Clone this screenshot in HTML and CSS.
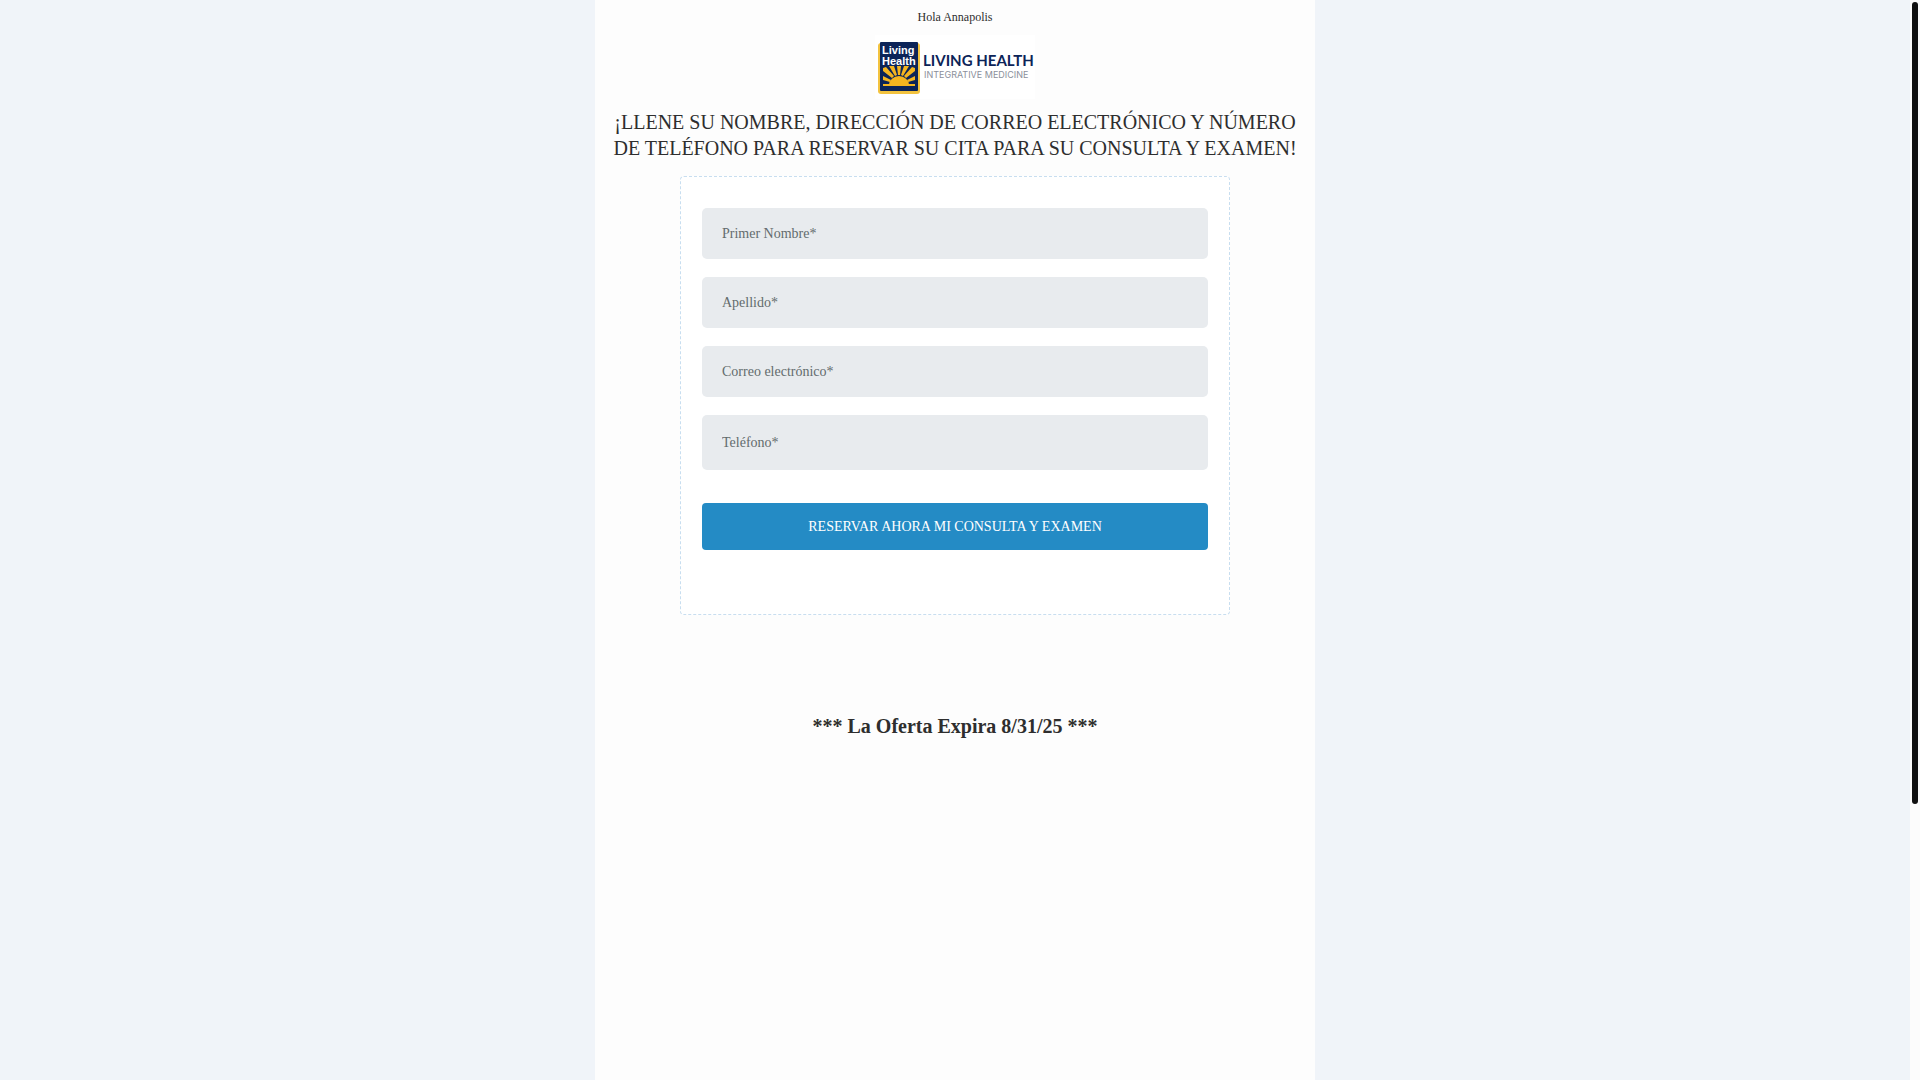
FILE: index.html
```html
<!DOCTYPE html>
<html lang="es">
<head>
<meta charset="utf-8">
<meta name="viewport" content="width=device-width, initial-scale=1">
<title>Living Health Integrative Medicine</title>
<link rel="stylesheet" href="styles.css">
</head>
<body>
<div class="page">
  <main class="column">
    <p class="greeting">Hola Annapolis</p>
    <svg class="logo" width="160" height="64" viewBox="0 0 160 64" role="img" aria-label="Living Health Integrative Medicine">
      <rect width="160" height="64" fill="#fff"/>
      <rect x="3" y="8" width="42" height="51" rx="3" fill="#f3c33f"/>
      <rect x="5" y="7" width="38" height="49" rx="1" fill="#0c2458"/>
      <text class="logo-badge" x="7" y="19">Living</text>
      <text class="logo-badge" x="7" y="30">Health</text>
      <g fill="#f5b51f">
        <path d="M14 50a10 9 0 0 1 20 0z"/>
        <path d="M8 49h32v2H8zM8 41l8 4-1 2-7-2zM40 41l-8 4 1 2 7-2zM8 33l3-1 8 9-2 2-9-7zM40 33l-3-1-8 9 2 2 9-7zM14 31h5l3 9-2 1zM34 31h-5l-3 9 2 1zM22 31h4l-1 9h-2z"/>
      </g>
      <text class="logo-name" x="48" y="31">LIVING HEALTH</text>
      <text class="logo-tag" x="49" y="43">INTEGRATIVE MEDICINE</text>
    </svg>
    <h1 class="title">¡LLENE SU NOMBRE, DIRECCIÓN DE CORREO ELECTRÓNICO Y NÚMERO DE TELÉFONO PARA RESERVAR SU CITA PARA SU CONSULTA Y EXAMEN!</h1>
    <form class="booking">
      <input class="field" type="text" name="first" placeholder="Primer Nombre*" aria-label="Primer Nombre">
      <input class="field" type="text" name="last" placeholder="Apellido*" aria-label="Apellido">
      <input class="field" type="email" name="email" placeholder="Correo electrónico*" aria-label="Correo electrónico">
      <input class="field field-phone" type="tel" name="phone" placeholder="Teléfono*" aria-label="Teléfono">
      <button class="submit" type="submit">RESERVAR AHORA MI CONSULTA Y EXAMEN</button>
    </form>
    <h2 class="offer">*** La Oferta Expira 8/31/25 ***</h2>
  </main>
  <div class="track" aria-hidden="true"><div class="thumb"></div></div>
</div>
</body>
</html>
```
FILE: styles.css
```css
* { box-sizing: border-box; }

body {
  margin: 0;
  background: #f0f4f9;
  color: #2e2e2e;
  font-family: "Liberation Serif", "Times New Roman", serif;
}

.page {
  display: grid;
  grid-template-columns: 1fr 10px;
  min-height: 100vh;
}

.column {
  display: flex;
  flex-direction: column;
  align-items: center;
  width: 100%;
  max-width: 720px;
  margin: 0 auto;
  padding: 8px 16px;
  background: #fdfdfd;
}

.greeting {
  margin: 0 0 9px;
  font-size: 12px;
  line-height: 18px;
}

.logo { display: block; }

.logo-badge {
  fill: #fff;
  font: bold 11px "Liberation Sans", Arial, sans-serif;
}

.logo-name {
  fill: #0c2458;
  font: 700 15px Lato, sans-serif;
}

.logo-tag {
  fill: #8b8f9b;
  font: 9px Inter, sans-serif;
}

.title {
  margin: 10px 0 15px;
  font-size: 20px;
  font-weight: 400;
  line-height: 26px;
  text-align: center;
}

.booking {
  display: flex;
  flex-direction: column;
  gap: 18px;
  width: 100%;
  max-width: 550px;
  padding: 31px 21px 64px;
  border: 1px dashed #c8def0;
  border-radius: 4px;
  background: #fff;
}

.field {
  width: 100%;
  height: 51px;
  padding: 0 20px;
  border: 0;
  border-radius: 5px;
  background: #e8ebee;
  color: #2e2e2e;
  font: 14px "Liberation Serif", "Times New Roman", serif;
}

.field::placeholder { color: #636b6d; opacity: 1; }

.field-phone { height: 55px; }

.submit {
  height: 47px;
  margin-top: 15px;
  border: 0;
  border-radius: 4px;
  background: #248bc5;
  color: #fff;
  font: 14px "Liberation Serif", "Times New Roman", serif;
}

.offer {
  margin: 98px 0 0;
  font-size: 20px;
  line-height: 26px;
}

.track {
  padding: 2px;
  background: #fcfcfc;
}

.thumb {
  height: 74.3vh;
  border-radius: 3px;
  background: #111;
}
```
